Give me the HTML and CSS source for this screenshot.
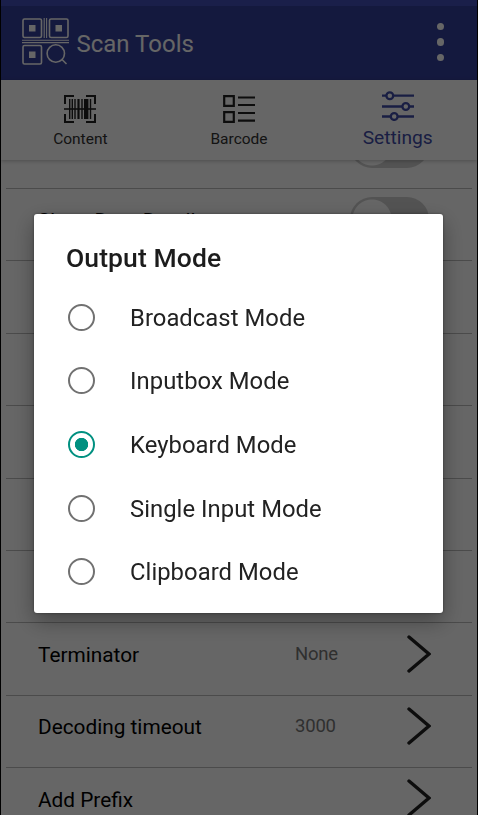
FILE: index.html
```
<!DOCTYPE html>
<html lang="en">
<head>
  <meta charset="UTF-8">
  <meta name="viewport" content="width=device-width, initial-scale=1.0">
  <title>Scan Tools</title>
  <link rel="stylesheet" href="styles.css">
</head>
<body>

<div class="app">
  <div class="statusbar"></div>
  <header class="toolbar">
    <svg class="logo" width="48" height="48" viewBox="0 0 48 48" fill="none" stroke="#fff" stroke-width="1.6">
      <rect x="1" y="1" width="18.5" height="18.5" rx="1.5"/>
      <rect x="27.5" y="1" width="18.5" height="18.5" rx="1.5"/>
      <rect x="1" y="27.5" width="18.5" height="18.5" rx="1.5"/>
      <path d="M22.2 0v20M24.6 0v20M0 22.3h47M0 24.6h47" stroke-width="1.1"/>
      <path d="M7 7h6.5v6.5H7zM33.5 7H40v6.5h-6.5zM7 33.5h6.5V40H7z" fill="#fff" stroke="none"/>
      <circle cx="33.8" cy="35.5" r="8.7"/>
      <path d="M40 41.5l4.5 4.5"/>
    </svg>
    <h1 class="title">Scan Tools</h1>
    <div class="more"><i></i><i></i><i></i></div>
  </header>

  <nav class="tabs">
    <div class="tab">
      <svg width="32" height="28" viewBox="0 0 32 28" fill="none" stroke="#222">
        <path d="M1 9V1h9M22 1h9v8M31 19v8h-9M10 27H1v-8" stroke-width="2"/>
        <path d="M0 14h32" stroke-width="1.6"/>
        <path d="M5.7 4v20M8.3 4v20M11 4v20M18 4v20M26.5 4v20" stroke-width="1.4"/>
        <path d="M14.5 4v20" stroke-width="2.2"/>
        <path d="M22.2 4v20" stroke-width="4.4"/>
      </svg>
      <span>Content</span>
    </div>
    <div class="tab">
      <svg width="32" height="28" viewBox="0 0 32 28" fill="none" stroke="#222" stroke-width="2.2">
        <path d="M1.2 1.2h9.6v9.6H1.2zM1.2 17.2h9.6v9.6H1.2zM15 2.5h17M15 10h17M15 18h17M15 25.7h17"/>
      </svg>
      <span>Barcode</span>
    </div>
    <div class="tab active">
      <svg width="32" height="30" viewBox="0 0 32 30" fill="none" stroke="#3f4da8" stroke-width="2.3">
        <path d="M0 4.7h4.5M11 4.7h21M0 15.5h20.5M27 15.5h5M0 25.5h9M15.5 25.5H32"/>
        <circle cx="7.8" cy="4.7" r="3.4"/>
        <circle cx="23.8" cy="15.5" r="3.4"/>
        <circle cx="12.2" cy="25.5" r="3.4"/>
      </svg>
      <span>Settings</span>
    </div>
  </nav>

  <main class="list">
    <div class="row"><span class="switch"></span></div>
    <div class="row"><span class="name">Show Data Details</span><span class="switch"></span></div>
    <div class="row"></div>
    <div class="row"></div>
    <div class="row"></div>
    <div class="row"></div>
    <div class="row"></div>
    <div class="row">
      <span class="name">Terminator</span>
      <span class="value">None</span>
      <svg class="arrow" width="24" height="38" viewBox="0 0 24 38"><path d="M2 2l20 17L2 36"/></svg>
    </div>
    <div class="row">
      <span class="name">Decoding timeout</span>
      <span class="value">3000</span>
      <svg class="arrow" width="24" height="38" viewBox="0 0 24 38"><path d="M2 2l20 17L2 36"/></svg>
    </div>
    <div class="row">
      <span class="name">Add Prefix</span>
      <span class="value"></span>
      <svg class="arrow" width="24" height="38" viewBox="0 0 24 38"><path d="M2 2l20 17L2 36"/></svg>
    </div>
  </main>
</div>

<div class="overlay">
  <div class="dialog">
    <h2>Output Mode</h2>
    <div class="option"><i class="radio"></i>Broadcast Mode</div>
    <div class="option"><i class="radio"></i>Inputbox Mode</div>
    <div class="option"><i class="radio checked"></i>Keyboard Mode</div>
    <div class="option"><i class="radio"></i>Single Input Mode</div>
    <div class="option"><i class="radio"></i>Clipboard Mode</div>
  </div>
</div>

</body>
</html>
```
FILE: styles.css
```
* {
  box-sizing: border-box;
}
body {
  margin: 0;
  overflow: hidden;
  font-family: Roboto, sans-serif;
}
.app {
  display: flex;
  flex-direction: column;
  height: 815px;
  border: solid #000;
  border-width: 0 1px;
  background: #fff;
}
.statusbar {
  height: 6px;
  background: #424fba;
}
.toolbar {
  display: flex;
  align-items: center;
  height: 74px;
  padding: 0 33px 0 21px;
  background: #343f9c;
}
.logo {
  margin-top: -3px;
}
.title {
  flex: 1;
  margin: 2px 0 0 6.5px;
  font-size: 24px;
  font-weight: 400;
  color: #fff;
}
.more {
  display: flex;
  flex-direction: column;
  gap: 8px;
  margin-top: -2px;
}
.more i {
  width: 7.4px;
  height: 7.4px;
  border-radius: 50%;
  background: #fff;
}
.tabs {
  position: relative;
  display: flex;
  height: 80px;
  background: #fff;
  box-shadow: 0 1px 4px rgba(0, 0, 0, 0.25);
}
.tab {
  flex: 1;
  display: flex;
  flex-direction: column;
  align-items: center;
  padding-top: 15px;
  font-size: 15.5px;
  color: #333;
}
.tab span {
  margin-top: 7px;
}
.tab.active {
  padding-top: 11px;
  font-size: 19.2px;
  color: #3f4da8;
}
.tab.active span {
  margin-top: 5px;
}
.list {
  flex: 1;
  display: flex;
  flex-direction: column;
  justify-content: flex-end;
  overflow: hidden;
  margin: 0 5px;
  /* last row runs past the bottom of the screen */
  margin-bottom: -25.5px;
}
.row {
  flex: none;
  display: flex;
  align-items: center;
  height: 72.4px;
  padding: 0 41px 11px 32px;
  border-bottom: 1px solid #bbb;
}
.name {
  flex: 1;
  margin-top: 3px;
  font-size: 20.8px;
  color: #000;
}
.value {
  width: 80px;
  margin: 1px 32px 0 0;
  font-size: 18.5px;
  letter-spacing: -0.2px;
  color: #777;
}
.arrow {
  fill: none;
  stroke: #222;
  stroke-width: 3.4;
  stroke-linecap: round;
}
.switch {
  width: 79px;
  height: 44px;
  margin: -1px 2px 0 auto;
  border-radius: 22px;
  background: radial-gradient(circle at 22px 22px, #fff 19px, #d0d0d0 20px);
}
.overlay {
  position: fixed;
  inset: 0;
  padding: 214px 35px 0 34px;
  background: rgba(0, 0, 0, 0.6);
}
.dialog {
  height: 399px;
  padding: 28px 32px 0;
  border-radius: 3px;
  background: #fff;
  box-shadow: 0 8px 22px rgba(0, 0, 0, 0.35), 0 0 3px rgba(0, 0, 0, 0.4);
}
.dialog h2 {
  margin: 0 0 12px;
  font-size: 26.5px;
  font-weight: 500;
  line-height: 32px;
  letter-spacing: 0.1px;
  color: #1c1c1c;
}
.option {
  display: flex;
  align-items: center;
  height: 63.6px;
  font-size: 23.8px;
  letter-spacing: 0.05px;
  color: #222;
}
.radio {
  width: 27px;
  height: 27px;
  margin: -1px 35px 0 2px;
  border: 2.6px solid #717171;
  border-radius: 50%;
}
.radio.checked {
  border-color: #009080;
  background: radial-gradient(circle, #009080 6.3px, #fff 7px);
}
```
